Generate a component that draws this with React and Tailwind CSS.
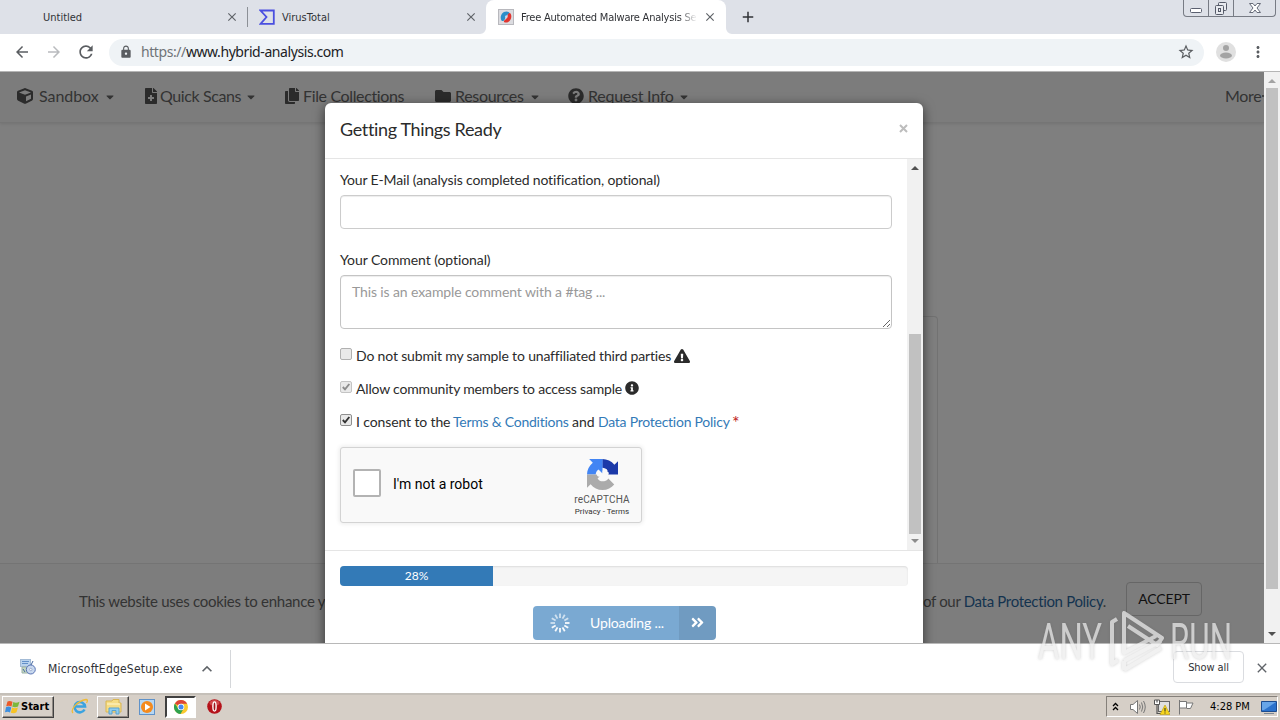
import {
    FaCube,
    FaFileMedical,
    FaCopy,
    FaFolder,
    FaQuestionCircle,
    FaExclamationTriangle,
    FaInfoCircle,
    FaAngleDoubleRight,
    FaCaretDown,
} from "react-icons/fa";
import {
    MdArrowBack,
    MdArrowForward,
    MdRefresh,
    MdLock,
    MdStarBorder,
    MdMoreVert,
    MdClose,
    MdAdd,
    MdKeyboardArrowUp,
} from "react-icons/md";

const navItems = [
    { label: "Sandbox", Icon: FaCube, box: "w-[126px]", text: "w-[60px] ml-[6px] tracking-[-0.05px]", caret: true },
    { label: "Quick Scans", Icon: FaFileMedical, box: "w-[141px]", text: "w-[80px] -ml-px pl-[2px] box-content tracking-[-0.4px]", caret: true },
    { label: "File Collections", Icon: FaCopy, box: "w-[151px]", text: "w-[102px] ml-[3px] tracking-[-0.36px]", caret: false },
    { label: "Resources", Icon: FaFolder, box: "w-[133px]", text: "w-[69px] ml-[4px] tracking-[-0.3px]", caret: true },
    { label: "Request Info", Icon: FaQuestionCircle, box: "w-[130px]", text: "w-[85px] ml-[4px] tracking-[-0.25px]", caret: true },
];

const VirusTotalIcon = () => (
    <svg className="w-4 h-4" viewBox="0 0 16 16" fill="none" stroke="#4a4fe0" strokeWidth="1.8">
        <path d="M1.500 1.500H14.800V14.800H1.500L7.500 8Z" />
    </svg>
);

const HybridIcon = () => (
    <svg className="w-4 h-4" viewBox="0 0 16 16">
        <rect x=".5" y=".5" width="15" height="15" fill="#dcdce0" stroke="#b8b8bd" />
        <path d="M3 10.500C1.800 6 5 2.500 8.500 2.500C12 2.700 12 4.500 10 5.500C7 7 8 9.500 6 11.500C5 12.500 3.500 12.200 3 10.500Z" fill="#2b8fc9" />
        <path d="M12.800 5C14.500 8.500 12 13.500 8 13.500C5 13.500 5.500 11.500 7.500 10.500C10 9 9 6 10.500 4.500C11.500 3.500 12.300 4 12.800 5Z" fill="#e0352f" />
        <circle cx="8.300" cy="7.700" r="1.300" fill="#c3dcef" />
    </svg>
);

const TabStrip = () => (
    <div className="h-[34px] flex bg-[#dee1e8] text-[11px] text-[#303236] font-['DejaVu_Sans_Condensed','DejaVu_Sans',sans-serif]">
        <div className="w-[248px] flex items-center pl-[43px]">
            <span className="w-[182px] pt-[2px] whitespace-nowrap">Untitled</span>
            <MdClose className="text-[14px] text-[#5f6368]" />
            <div className="ml-[8px] w-px h-5 bg-[#8c9096]"></div>
        </div>
        <div className="w-[238px] flex items-center pl-[11px]">
            <VirusTotalIcon />
            <span className="ml-[7px] w-[182px] pt-[2px] whitespace-nowrap">VirusTotal</span>
            <MdClose className="text-[14px] text-[#5f6368]" />
        </div>
        <div className="w-[240px] relative flex items-center pl-[12px] bg-white rounded-t-[8px]">
            <HybridIcon />
            <span className="ml-[7px] w-[176px] pt-[2px] overflow-hidden whitespace-nowrap tracking-[-0.22px] [mask-image:linear-gradient(to_right,black_90%,transparent)]">
                Free Automated Malware Analysis Service
            </span>
            <MdClose className="ml-[6px] text-[14px] text-[#5f6368]" />
            {/* curved feet of the active tab */}
            <svg className="absolute -left-[6px] bottom-0 w-[6px] h-[6px]" viewBox="0 0 6 6"><path d="M6 0A6 6 0 0 1 0 6H6Z" fill="white" /></svg>
            <svg className="absolute -right-[6px] bottom-0 w-[6px] h-[6px]" viewBox="0 0 6 6"><path d="M0 0A6 6 0 0 0 6 6H0Z" fill="white" /></svg>
        </div>
        <div className="flex items-center pl-[13px] grow">
            <MdAdd className="text-[18px] text-[#303236]" />
        </div>
        <div className="mr-[4px] w-[93px] h-[17px] flex border border-t-0 border-[#777b84] rounded-b-[4px] bg-[#dee1e8]">
            <div className="w-[25px] border-r border-[#777b84] flex justify-center">
                <svg className="w-4 h-4" viewBox="0 0 16 16"><rect x="2.500" y="8.500" width="11" height="4" rx="1" fill="#fff" stroke="#5b6070" /></svg>
            </div>
            <div className="w-[25px] border-r border-[#777b84] flex justify-center">
                <svg className="w-4 h-4" viewBox="0 0 16 16" fill="#e8eaef" stroke="#555a68">
                    <rect x="5.500" y="2.500" width="8" height="8" rx="1" />
                    <rect x="2.500" y="5.500" width="8" height="9" rx="1" />
                    <rect x="5.500" y="8.500" width="2" height="3" />
                </svg>
            </div>
            <div className="grow flex justify-center">
                <svg className="w-4 h-4" viewBox="0 0 16 16" fill="#fff" stroke="#666b78">
                    <path d="M2.500 3.500H6L8 6L10 3.500H13.500L10 8L13.500 12.500H10L8 10L6 12.500H2.500L6 8Z" />
                </svg>
            </div>
        </div>
    </div>
);

const Toolbar = () => (
    <div className="h-[38px] pb-px flex items-center bg-white border-b border-[#b5b5b5] text-[#5a5d61]">
        <MdArrowBack className="ml-[13px] text-[18px]" />
        <MdArrowForward className="ml-[14px] text-[18px] text-[#b9bbbe]" />
        <MdRefresh className="ml-[13px] text-[20px]" />
        <div className="ml-[13px] w-[1095px] h-[27px] rounded-full bg-[#eff3f6] flex items-center pl-[10px]">
            <MdLock className="text-[14px]" />
            <span className="ml-[8px] pb-[2px] w-[1036px] text-[14px] whitespace-nowrap text-[#202124] tracking-[-0.42px] font-['Noto_Sans',sans-serif]">
                <span className="text-[#6f7478]">https://</span>www.hybrid-analysis.com
            </span>
            <MdStarBorder className="text-[18px]" />
        </div>
        <svg className="ml-[12px] w-5 h-5" viewBox="0 0 20 20">
            <circle cx="10" cy="10" r="10" fill="#e0e0e0" />
            <circle cx="10" cy="6" r="3" fill="#a3a3a3" />
            <ellipse cx="10" cy="13.500" rx="6" ry="3" fill="#a3a3a3" />
        </svg>
        <MdMoreVert className="ml-[13px] text-[18px]" />
    </div>
);

// page behind the modal, already dimmed by the backdrop
const DimmedPage = () => (
    <div className="w-[1264px] h-[571px] flex flex-col bg-[#7f7f7f] text-[#333333] font-[Lato,sans-serif]">
        <div className="h-[51px] pb-[2px] flex items-center pl-[17px] bg-[#7c7c7c] border-b border-[#757575] shadow-[0_1px_3px_rgba(0,0,0,0.1)] text-[16px]">
            {navItems.map(({ label, Icon, box, text, caret }) => (
                <div key={label} className={`${box} flex items-center`}>
                    <Icon className="text-[16px] shrink-0 text-[#2b2b2b]" />
                    <span className={`${text} whitespace-nowrap`}>{label}</span>
                    {caret && <FaCaretDown className="mt-[2px] ml-[5px] text-[12px]" />}
                </div>
            ))}
            <span className="ml-auto w-[37px] tracking-[-0.3px] whitespace-nowrap">More</span>
            <div className="w-[2px] h-[2px] bg-[#444444]"></div>
        </div>
        <div className="grow flex pl-[330px] pt-[193px]">
            <div className="w-[608px] border-t border-r border-[#727272] rounded-tr-[4px]"></div>
        </div>
        <div className="h-[80px] pb-[5px] border-t border-[#747474] bg-[#7d7d7d] flex items-center text-[15px]">
            <span className="ml-[79px] w-[844px] whitespace-nowrap tracking-[-0.28px]">
                This website uses cookies to enhance your browsing experience.
            </span>
            <span className="w-[203px] whitespace-nowrap tracking-[-0.33px]">
                of our <span className="text-[#14334f]">Data Protection Policy</span>.
            </span>
            <div className="mb-[5px] w-[76px] h-[34px] border border-[#666666] rounded-[4px] text-[#111111] text-[14px] tracking-[-0.15px] flex items-center justify-center">
                ACCEPT
            </div>
        </div>
    </div>
);

const ScrollArrow = ({ up, className }) => (
    <svg className={className} viewBox="0 0 8 4"><path d={up ? "M0 4L4 0L8 4Z" : "M0 0L4 4L8 0Z"} fill="currentColor" /></svg>
);

const Checkbox = ({ checked, color }) => (
    <svg className="w-3 h-3 shrink-0" viewBox="0 0 12 12">
        <rect x=".5" y=".5" width="11" height="11" rx="1.500" fill="#e9e9e9" stroke={color} />
        {checked && <path d="M2.800 6L5 8.300L9.300 3" fill="none" stroke={color === "#c4c4c4" ? "#8c8c8c" : "#333"} strokeWidth="1.900" />}
    </svg>
);

const RecaptchaLogo = () => (
    <svg className="w-[31px] h-[31px]" viewBox="0 0 64 64">
        <path d="M64 32V4.500L56.500 12C50.500 4.500 41.500 0 31.500 0V18C36 18 40 20 42.500 23.800L34 32Z" fill="#1c3aa9" />
        <path d="M32 0H4.500L12 7.500C4.500 13.500 0 22 0 32H18C18 28 20 24 23.800 21.500L32 30Z" fill="#4285f4" />
        <path d="M0 32V59.500L7.500 52C13.500 59.500 22 64 32 64C42 64 50.500 59.800 56.200 52.500L44 40.200C41 45 37 46 32 46C28 46 24.500 44.500 21.800 40.200L30 32Z" fill="#ababab" />
        <path d="M32 25C36 18 42 21 42 26C46 27 46 33 42 34C40 42 34 46 30 44C26 42 27 38 29 36C22 38 20 34 20 31C22 27 28 27 32 31Z" fill="#f9f9f9" />
    </svg>
);

const Recaptcha = () => (
    <div className="w-[302px] h-[76px] flex items-center bg-[#f9f9f9] border border-[#d3d3d3] rounded-[3px] shadow-[0_0_4px_1px_rgba(0,0,0,0.08)] text-black font-[Roboto,sans-serif]">
        <div className="ml-[12px] mb-[4px] w-7 h-7 bg-white border-2 border-[#b3b3b3] rounded-[2px]"></div>
        <span className="ml-[12px] w-[180px] mb-[2px] text-[14px]">I'm not a robot</span>
        <div className="w-[58px] pt-[7px] flex flex-col items-center text-[#555555]">
            <RecaptchaLogo />
            <span className="mt-[3px] text-[10px] leading-[13px] tracking-[0.15px]">reCAPTCHA</span>
            <span className="text-[8px] leading-[12px] text-[#333333]">Privacy - Terms</span>
        </div>
    </div>
);

const Spinner = () => (
    <svg className="w-5 h-5" viewBox="0 0 20 20" stroke="white" strokeWidth="1.800">
        {[0, 30, 60, 90, 120, 150, 180, 210, 240, 270, 300, 330].map((a) => (
            <path key={a} d="M10 0.500V5" transform={`rotate(${a} 10 10)`} opacity={a > 80 && a < 250 ? 0.95 : 0.65} />
        ))}
    </svg>
);

const Modal = () => (
    <div className="mt-[31px] w-[598px] h-[600px] flex flex-col bg-white rounded-[6px] shadow-[0_3px_12px_rgba(0,0,0,0.6)] text-[14px] text-[#2b2b2b] font-[Lato,sans-serif]">
        <div className="h-[56px] pb-[2px] shrink-0 flex items-center px-[15px] border-b border-[#e5e5e5]">
            <span className="grow text-[18px] tracking-[-0.35px]">Getting Things Ready</span>
            <svg className="mb-[3px] w-[9px] h-[9px]" viewBox="0 0 9 9" stroke="#bdbdbd" strokeWidth="2"><path d="M1 1L8 8M8 1L1 8" /></svg>
        </div>
        <div className="h-[391px] shrink-0 flex">
            <div className="w-[582px] px-[15px] pt-[11px] whitespace-nowrap leading-5">
                <div className="tracking-[-0.15px]">Your E-Mail (analysis completed notification, optional)</div>
                <div className="mt-[5px] w-[552px] h-[34px] border border-[#cccccc] rounded-[4px] shadow-[inset_0_1px_1px_rgba(0,0,0,0.075)]"></div>
                <div className="mt-[21px] tracking-[-0.08px]">Your Comment (optional)</div>
                <div className="mt-[5px] w-[552px] h-[54px] relative border border-[#c4c4c4] rounded-[4px] px-[11px] pt-[6px] text-[#999999] tracking-[-0.12px] shadow-[inset_0_1px_1px_rgba(0,0,0,0.075)]">
                    This is an example comment with a #tag ...
                    <svg className="absolute right-0 bottom-0 w-[9px] h-[9px]" viewBox="0 0 9 9" stroke="#666"><path d="M1 8L8 1M5 8L8 5" /></svg>
                </div>
                <div className="mt-[17px] h-5 flex items-center">
                    <div className="mb-[4px]"><Checkbox color="#b0b0b0" /></div>
                    <span className="ml-[4px] w-[318px] tracking-[-0.16px]">Do not submit my sample to unaffiliated third parties</span>
                    <FaExclamationTriangle className="text-[16px]" />
                </div>
                <div className="mt-[13px] h-5 flex items-center">
                    <div className="mb-[4px]"><Checkbox checked color="#c4c4c4" /></div>
                    <span className="ml-[4px] w-[269px] tracking-[-0.18px]">Allow community members to access sample</span>
                    <FaInfoCircle className="mb-[2px] text-[14px]" />
                </div>
                <div className="mt-[13px] h-5 flex items-center">
                    <div className="mb-[4px]"><Checkbox checked color="#8f8f8f" /></div>
                    <span className="ml-[4px] w-[97px] tracking-[-0.12px]">I consent to the</span>
                    <span className="w-[119px] tracking-[-0.25px] text-[#337ab7]">Terms &amp; Conditions</span>
                    <span className="w-[26px]">and</span>
                    <span className="w-[134px] tracking-[-0.25px] text-[#337ab7]">Data Protection Policy</span>
                    <span className="text-[18px] text-[#c02020]">*</span>
                </div>
                <div className="mt-[15px]">
                    <Recaptcha />
                </div>
            </div>
            <div className="w-4 flex flex-col items-center bg-[#f1f1f1]">
                <ScrollArrow up className="mt-[7px] w-2 h-1 text-[#505050]" />
                <div className="mt-[164px] w-3 h-[200px] bg-[#c1c1c1]"></div>
                <ScrollArrow className="mt-[5px] w-2 h-1 text-[#8b8b8b]" />
            </div>
        </div>
        <div className="grow border-t border-[#e5e5e5] px-[15px] pt-[15px]">
            <div className="w-[568px] h-5 flex rounded-[4px] overflow-hidden bg-[#f5f5f5] shadow-[inset_0_1px_2px_rgba(0,0,0,0.1)]">
                <div className="w-[153px] bg-[#337ab7] text-white text-[12px] leading-5 text-center">28%</div>
            </div>
            <div className="mt-[20px] ml-[193px] w-[183px] h-[34px] flex rounded-[4px] overflow-hidden text-white">
                <div className="w-[146px] pb-px bg-[#7aa9d2] flex items-center pl-[17px]">
                    <Spinner />
                    <span className="ml-[20px] whitespace-nowrap tracking-[-0.15px]">Uploading ...</span>
                </div>
                <div className="w-[37px] pb-px bg-[#709bc1] flex items-center justify-center">
                    <FaAngleDoubleRight className="text-[15px]" />
                </div>
            </div>
        </div>
    </div>
);

const SetupIcon = () => (
    <svg className="w-4 h-4" viewBox="0 0 16 16">
        <rect x=".5" y=".5" width="10" height="7" fill="#b9d3ee" stroke="#a3bbd6" />
        <path d="M2 2.500H9M2 4.500H8" stroke="#6290c8" />
        <path d="M2 8H8V14H2Z" fill="#c4d8c0" stroke="#9ab0a8" />
        <circle cx="10.800" cy="10.500" r="4.500" fill="#c8d8ee" stroke="#5873b4" />
        <path d="M11 6L13 2M5 13L3 10" stroke="#45679f" />
        <circle cx="10.800" cy="10.500" r="1.200" fill="#fff" stroke="#9badd0" />
    </svg>
);

const DownloadBar = () => (
    <div className="h-[50px] flex items-center bg-white border-t border-[#b8b8b8] text-[#303236] font-['DejaVu_Sans_Condensed','DejaVu_Sans',sans-serif]">
        <div className="ml-[20px] mb-[3px]"><SetupIcon /></div>
        <span className="ml-[12px] pt-px w-[149px] text-[12px] whitespace-nowrap tracking-[0.2px]">MicrosoftEdgeSetup.exe</span>
        <MdKeyboardArrowUp className="text-[20px] text-[#5f6368]" />
        <div className="ml-[13px] w-px h-[38px] bg-[#d5d7da]"></div>
        <div className="ml-auto mb-[4px] pt-[3px] w-[71px] h-[32px] border border-[#dadce0] rounded-[4px] flex items-center justify-center text-[11px] tracking-[-0.1px]">
            Show all
        </div>
        <MdClose className="ml-[10px] mr-[10px] mb-[2px] text-[16px] text-[#5f6368]" />
    </div>
);

const Watermark = () => (
    <svg className="absolute left-[1030px] top-[602px] w-[210px] h-[76px]" viewBox="0 0 210 76">
        <g className="font-[Roboto,sans-serif] text-[50px] [filter:drop-shadow(0_0_1.5px_rgba(90,90,90,0.4))]" fill="#ececec" opacity="0.72">
            <text x="8" y="57" textLength="64" lengthAdjust="spacingAndGlyphs">ANY</text>
            <text x="140" y="57" textLength="62" lengthAdjust="spacingAndGlyphs">RUN</text>
            <g fill="none" stroke="#ececec" strokeWidth="4" strokeLinejoin="round">
                <path d="M87 17L82 20V62L88 58" />
                <path d="M98 24L127 43L132 36L94 11V51L126 34" />
                <path d="M94 59L131 39M94 68L131 46M94 59V68" />
            </g>
        </g>
    </svg>
);

const IeIcon = () => (
    <svg className="w-[17px] h-[17px]" viewBox="0 0 17 17" fill="none">
        <path d="M13.500 11.500A5.200 5.200 0 1 1 14 8.500H4.500" stroke="#3ba3e0" strokeWidth="2.600" />
        <path d="M2 15C-1 12 6 3 15 1.500C17 1.500 16.500 3.500 15.500 5" stroke="#f0bb35" strokeWidth="1.300" />
    </svg>
);

const FolderIcon = () => (
    <svg className="w-[17px] h-[17px]" viewBox="0 0 17 17">
        <path d="M1 3H7L8 1.500H14V5H16V14H1Z" fill="#f5dc85" stroke="#d9b652" />
        <path d="M2 6H15" stroke="#fff6cf" />
        <path d="M4 16V10H14V16H11V12.500H7V16Z" fill="#8fcdf0" stroke="#5aa3cf" />
    </svg>
);

const PlayerIcon = () => (
    <svg className="w-[16px] h-[16px]" viewBox="0 0 16 16">
        <rect x=".5" y=".5" width="15" height="15" fill="#b6d7f3" stroke="#5f92c9" />
        <circle cx="8" cy="8" r="6" fill="#f48a1d" />
        <path d="M6 4.500L11.500 8L6 11.500Z" fill="#fff" />
    </svg>
);

const ChromeIcon = () => (
    <svg className="w-[14px] h-[14px]" viewBox="0 0 14 14">
        <circle cx="7" cy="7" r="7" fill="#fbc92f" />
        <path d="M7 7L0.900 3.500A7 7 0 0 1 13.100 3.700H7Z" fill="#de4437" />
        <path d="M0.900 3.500A7 7 0 0 0 6.500 14L9.700 8.600L4.200 8.600Z" fill="#2fa24f" />
        <circle cx="7" cy="7" r="3.300" fill="#fff" />
        <circle cx="7" cy="7" r="2.500" fill="#4688f1" />
    </svg>
);

const OperaIcon = () => (
    <svg className="w-[15px] h-[15px]" viewBox="0 0 15 15">
        <circle cx="7.500" cy="7.500" r="7.300" fill="#b5121a" />
        <ellipse cx="7.500" cy="4" rx="5" ry="3" fill="#e36a6d" opacity=".6" />
        <ellipse cx="7.500" cy="7.500" rx="2.300" ry="5.200" fill="#fff" />
        <ellipse cx="7.500" cy="7.500" rx="0.900" ry="4" fill="#a0141c" />
    </svg>
);

const WindowsFlag = () => (
    <svg className="w-[15px] h-[14px]" viewBox="0 0 15 14">
        <path d="M2.500 1.500C4 0.500 5.500 0.800 7.500 1.800L6.500 6.500C4.500 5.500 3 5.500 1.200 6.300Z" fill="#ec5a28" />
        <path d="M8.300 2C10 3 12 3 14.500 1.800L13 6.500C11 7.500 9 7.300 7.300 6.700Z" fill="#7cb83c" />
        <path d="M1 7.200C3 6.300 4.500 6.500 6.300 7.400L5 12.500C3.500 11.500 2 11.500 0 12.300Z" fill="#3d8fe0" />
        <path d="M7.100 7.600C9 8.400 11 8.300 12.900 7.400L11.500 12.300C9.500 13.500 7.500 13.200 5.800 12.700Z" fill="#f7c325" />
    </svg>
);

const Taskbar = () => (
    <div className="h-[27px] pb-[2px] flex items-center border-t-2 border-[#c5c0b9] bg-[#d6cfc7] text-black font-['DejaVu_Sans_Condensed','DejaVu_Sans',sans-serif]">
        <div className="ml-[2px] w-[52px] h-[22px] flex items-center pl-[2px] border border-t-white border-l-white border-r-[#404040] border-b-[#404040] shadow-[inset_-1px_-1px_0_#908a84]">
            <WindowsFlag />
            <span className="ml-px pt-px text-[11px] font-bold">Start</span>
        </div>
        <div className="ml-[17px]"><IeIcon /></div>
        <div className="ml-[9px] w-[32px] h-[22px] flex items-center justify-center border border-t-white border-l-white border-r-[#404040] border-b-[#404040] shadow-[inset_-1px_-1px_0_#908a84]">
            <FolderIcon />
        </div>
        <div className="ml-[10px]"><PlayerIcon /></div>
        <div className="ml-[10px] w-[31px] h-[22px] flex items-center justify-center bg-white border-2 border-t-[#404040] border-l-[#404040] border-r-white border-b-white">
            <ChromeIcon />
        </div>
        <div className="ml-[11px]"><OperaIcon /></div>
        <div className="ml-auto mr-[2px] w-[172px] h-[21px] flex items-center border border-t-[#85807a] border-l-[#85807a] border-r-white border-b-white">
            <svg className="ml-[5px] mb-px w-[7px] h-[9px]" viewBox="0 0 7 9" fill="none" stroke="#000" strokeWidth="1.300"><path d="M1 4L3.500 1.500L6 4M1 8L3.500 5.500L6 8" /></svg>
            <svg className="ml-[11px] w-4 h-4" viewBox="0 0 16 16" fill="none" stroke="#777">
                <path d="M.5 5.500H3L7.500 1.500V14.500L3 10.500H.5Z" fill="#fff" />
                <path d="M9.500 5.500Q11 8 9.500 10.500M11.500 3.500Q14 8 11.500 12.500M13.500 2Q17 8 13.500 14" />
            </svg>
            <svg className="ml-[8px] w-4 h-4" viewBox="0 0 16 16">
                <rect x="4.500" y="2.500" width="11" height="10" fill="#e0e0e0" stroke="#666" />
                <path d="M.5 1H5.500V5.500H.5Z" fill="#fff" stroke="#555" />
                <path d="M3 1V3.500M3 5.500V14.500H8" fill="none" stroke="#555" strokeWidth="1.200" />
                <path d="M11 6L16 15.500H6Z" fill="#f8d61c" stroke="#b99a10" strokeWidth=".6" />
                <path d="M11 9V12.500M11 13.500V14.500" stroke="#222" />
            </svg>
            <svg className="ml-[8px] w-4 h-4" viewBox="0 0 16 16" fill="#fff" stroke="#777">
                <path d="M1.500 1V15.500M2 2.500H8.500V9H2M8.500 4H15L12.500 9.500H8.500" />
            </svg>
            <span className="ml-[16px] w-[51px] pt-[2px] text-[11px] whitespace-nowrap">4:28 PM</span>
            <svg className="w-4 h-4" viewBox="0 0 16 16">
                <path d="M.5 2.500H15.500V12.500H.5Z" fill="#2b72cc" stroke="#1c4c8f" />
                <path d="M1 3H15L3 11H1Z" fill="#67a5e8" />
                <path d="M3 14.500H13" stroke="#7a8694" />
            </svg>
        </div>
    </div>
);

const App = () => {
    return (
        <div className="relative w-[1280px] h-[720px] overflow-hidden flex flex-col bg-white">
            <TabStrip />
            <Toolbar />
            <div className="relative h-[571px] flex overflow-hidden">
                <DimmedPage />
                <div className="absolute inset-0 pr-[32px] flex justify-center">
                    <Modal />
                </div>
                <div className="relative w-4 flex flex-col items-center bg-[#f1f1f1]">
                    <ScrollArrow up className="mt-[7px] w-2 h-1 text-[#a3a3a3]" />
                    <div className="mt-[5px] w-3 h-[501px] bg-[#c1c1c1]"></div>
                    <ScrollArrow className="mt-auto mb-[7px] w-2 h-1 text-[#505050]" />
                </div>
            </div>
            <DownloadBar />
            <Taskbar />
            <Watermark />
        </div>
    );
};

export default App;
